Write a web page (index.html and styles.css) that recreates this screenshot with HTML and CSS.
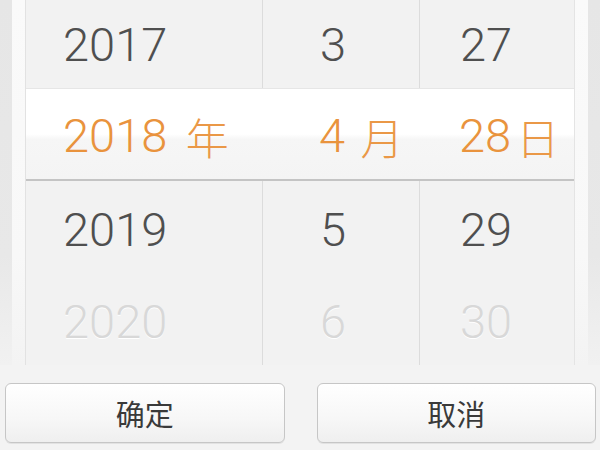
FILE: index.html
```html
<!DOCTYPE html>
<html lang="zh-CN">
<head>
<meta charset="utf-8">
<title>日期选择</title>
<link rel="stylesheet" href="styles.css">
</head>
<body>
<div class="screen">
  <div class="top">
    <div class="rail rail-dark"></div>
    <div class="rail rail-light"></div>
    <div class="picker">
      <div class="row r1">
        <div class="cell c1">2017</div>
        <div class="cell c2">3</div>
        <div class="cell c3">27</div>
      </div>
      <div class="row selected">
        <div class="cell c1">2018&nbsp;<span class="unit unit-year">年</span></div>
        <div class="cell c2">4&nbsp;<span class="unit unit-month">月</span></div>
        <div class="cell c3">28<span class="unit unit-day">日</span></div>
      </div>
      <div class="row r3">
        <div class="cell c1">2019</div>
        <div class="cell c2">5</div>
        <div class="cell c3">29</div>
      </div>
      <div class="row r4 faded">
        <div class="cell c1">2020</div>
        <div class="cell c2">6</div>
        <div class="cell c3">30</div>
      </div>
    </div>
    <div class="rail rail-light"></div>
    <div class="rail rail-dark"></div>
  </div>
  <div class="actions">
    <button class="btn">确定</button>
    <button class="btn">取消</button>
  </div>
</div>
</body>
</html>
```
FILE: styles.css
```css
html, body {
  margin: 0;
  padding: 0;
  background: #f3f3f3;
}
.screen {
  width: 600px;
  height: 450px;
  overflow: hidden;
  font-family: "Roboto", "Noto Sans CJK SC", sans-serif;
}
.top {
  display: flex;
  height: 365px;
}
.rail {
  width: 12px;
  flex: none;
}
.rail-dark {
  background: linear-gradient(to bottom, #e6e6e6 0%, #e8e8e8 70%, #f1f1f1 100%);
}
.rail-light {
  width: 13px;
  background: linear-gradient(to bottom, #fafafa 0%, #f8f8f8 70%, #f3f3f3 100%);
}
.picker {
  flex: 1;
  display: flex;
  flex-direction: column;
  background: #f2f2f2;
  border-left: 1px solid #e2e2e2;
  border-right: 1px solid #e4e4e4;
}
.row {
  display: grid;
  grid-template-columns: 236px 157px 1fr;
  color: #4f4f4f;
  font-size: 47px;
  font-weight: 300;
}
.r1 { height: 88px; }
.selected {
  height: 90px;
  background: linear-gradient(to bottom, #ffffff 0%, #ffffff 50%, #f6f6f6 56%, #f4f4f4 100%);
  border-top: 1px solid #e6e6e6;
  border-bottom: 2px solid #c4c4c4;
  color: #e9933d;
}
.selected .cell {
  padding-top: 3px;
}
.r3 { height: 96px; }
.r4 { height: 88px; }
.cell {
  display: flex;
  align-items: center;
  white-space: nowrap;
}
.c1 { padding-left: 37px; }
.c2 { padding-left: 57px; }
.c3 { padding-left: 40px; }
.row:not(.selected) .c2,
.row:not(.selected) .c3 {
  border-left: 1px solid #dcdcdc;
}
.unit {
  font-family: "Noto Sans CJK SC", sans-serif;
  font-size: 43px;
  font-weight: 300;
  color: #ea9847;
}
.unit-year { margin-left: 7px; }
.unit-month { margin-left: 4px; }
.unit-day { margin-left: 5px; }
.faded {
  color: #d8d8d8;
  text-shadow: 0 1px 0 #ffffff;
}
.faded .c2,
.faded .c3 {
  border-left-color: #e8e8e8;
}
.actions {
  display: flex;
  gap: 32px;
  padding: 18px 4px 0 5px;
}
.btn {
  flex: 1;
  height: 60px;
  margin: 0;
  padding: 0;
  border: 1px solid #c6c6c6;
  border-radius: 6px;
  background: linear-gradient(to bottom, #ffffff 0%, #f7f7f7 60%, #efefef 100%);
  box-shadow: inset 0 1px 0 #ffffff, 0 1px 0 #e2e2e2;
  font-family: "Noto Sans CJK SC", sans-serif;
  font-size: 29px;
  color: #3a3a3a;
}
```
